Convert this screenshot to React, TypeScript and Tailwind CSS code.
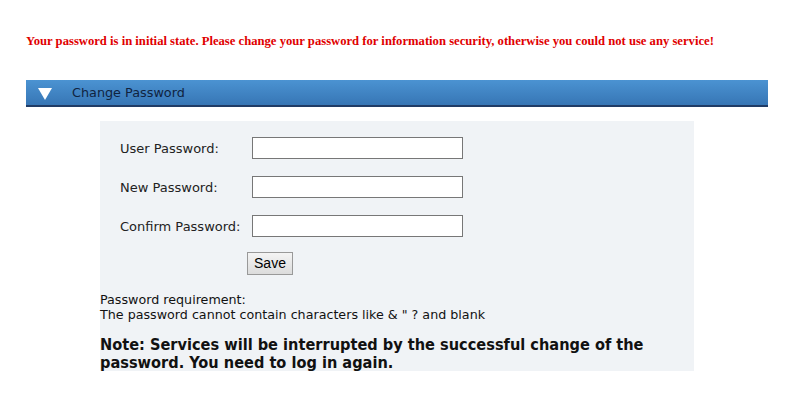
export default function App() {
  const rows = ["User Password:", "New Password:", "Confirm Password:"];
  return (
    <div className="w-[786px] h-[404px] bg-white overflow-hidden">
      <div className="pt-[33px] pl-[26px] text-[12.65px] font-bold text-[#e00000] leading-[16px] font-['Liberation_Serif',serif]">
        Your password is in initial state. Please change your password for information security, otherwise you could not use any service!
      </div>
      <div className="mt-[31px] ml-[26px] w-[742px] h-[27px] bg-gradient-to-b from-[#4b93d2] to-[#3776b5] border-b-2 border-[#203c66] flex items-center">
        <svg width="16" height="14" viewBox="0 0 16 14" className="ml-[11px] mt-[2px]">
          <polygon points="1,1 15,1 8,13" fill="#ffffff" />
        </svg>
        <span className="ml-[19px] text-[12.8px] text-[#10233f] font-['DejaVu_Sans',Verdana,sans-serif]">Change Password</span>
      </div>
      <div className="mt-[14px] ml-[100px] w-[594px] h-[250px] bg-[#f0f3f6] pt-[16px]">
        <div className="flex flex-col gap-[17px] pl-[20px]">
          {rows.map((r) => (
            <div key={r} className="flex items-center h-[22px]">
              <span className="w-[132px] text-[13px] text-[#222] pt-[2px] font-['DejaVu_Sans',Verdana,sans-serif]">{r}</span>
              <div className="w-[211px] h-[22px] bg-white border border-[#777]" />
            </div>
          ))}
        </div>
        <div className="pl-[147px] mt-[13px]">
          <button className="w-[46px] h-[23px] border border-[#999] bg-gradient-to-b from-[#f4f4f4] to-[#dcdcdc] text-[14px] text-black font-['Liberation_Sans',Arial,sans-serif]">Save</button>
        </div>
        <div className="mt-[17px] text-[12.7px] leading-[15px] text-[#111] font-['DejaVu_Sans',Tahoma,sans-serif]">
          <div>Password requirement:</div>
          <div>The password cannot contain characters like &amp; " ? and blank</div>
        </div>
        <div className="mt-[14px] text-[16.2px] leading-[18px] font-bold text-[#111] font-['DejaVu_Sans_Condensed',Tahoma,sans-serif]">
          Note: Services will be interrupted by the successful change of the password. You need to log in again.
        </div>
      </div>
    </div>
  );
}
